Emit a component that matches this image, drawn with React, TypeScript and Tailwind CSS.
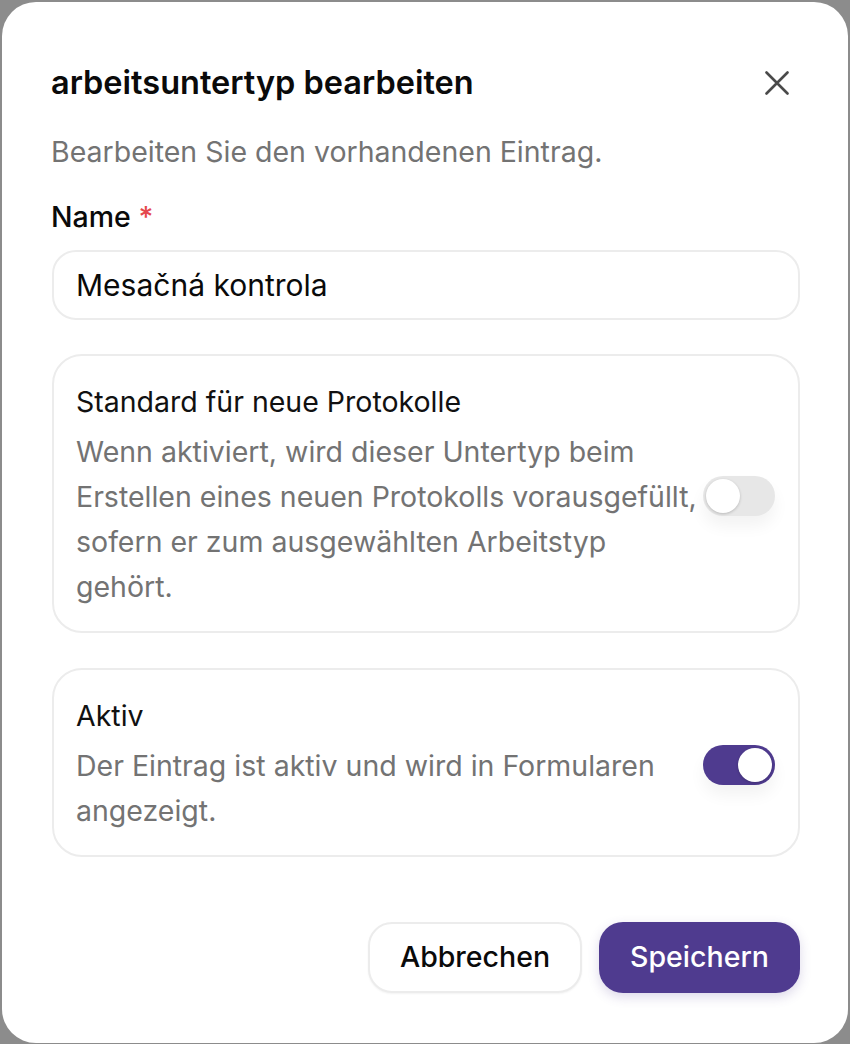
import { useState } from "react";

const font = { fontFamily: "Inter, 'Liberation Sans', sans-serif" };

type ToggleProps = { checked: boolean; onChange: (v: boolean) => void };

const Toggle = ({ checked, onChange }: ToggleProps) => (
  <button
    type="button"
    onClick={() => onChange(!checked)}
    className={
      checked
        ? "relative h-[40px] w-[72px] shrink-0 rounded-full bg-[#4f3b8f] shadow-[0_10px_16px_rgba(0,0,0,0.05)]"
        : "relative h-[40px] w-[72px] shrink-0 rounded-full bg-[#e7e7e7] shadow-[0_10px_16px_rgba(0,0,0,0.05)]"
    }
  >
    <span
      className={
        checked
          ? "absolute top-[3px] left-[35px] h-[34px] w-[34px] rounded-full bg-white shadow-[0_1px_3px_rgba(0,0,0,0.2)]"
          : "absolute top-[3px] left-[3px] h-[34px] w-[34px] rounded-full bg-white shadow-[0_1px_3px_rgba(0,0,0,0.2)]"
      }
    />
  </button>
);

type SettingCardProps = {
  title: string;
  description: string;
  checked: boolean;
  onChange: (v: boolean) => void;
};

const SettingCard = ({ title, description, checked, onChange }: SettingCardProps) => (
  <div className="flex items-center gap-[4px] rounded-[30px] border-2 border-[#ececec] pt-[27px] pb-[22px] pl-[22px] pr-[23px]">
    <div className="flex-1">
      <div className="text-[28.5px] leading-[38px] text-[#111]">{title}</div>
      <p className="mt-[8px] text-[28.5px] leading-[45px] text-[#737373]">{description}</p>
    </div>
    <Toggle checked={checked} onChange={onChange} />
  </div>
);

const App = () => {
  const [name, setName] = useState("Mesačná kontrola");
  const [isDefault, setIsDefault] = useState(false);
  const [isActive, setIsActive] = useState(true);

  return (
    <div className="min-h-[1044px] bg-[#8c8c8c] p-[2px]" style={font}>
      <div className="flex min-h-[1040px] flex-col rounded-[34px] bg-white pl-[50px] pr-[48px] pt-[59px] pb-[50px]">
        {/* Header */}
        <div className="flex items-center justify-between">
          <h2 className="-ml-[1px] text-[32.5px] font-semibold leading-[44px] text-[#0a0a0a]">
            arbeitsuntertyp bearbeiten
          </h2>
          <button type="button" className="mr-[11px] text-[#4a4a4a]">
            <svg width="24" height="24" viewBox="0 0 24 24" fill="none" stroke="currentColor" strokeWidth="2.6" strokeLinecap="round">
              <path d="M1.5 1.5 22.5 22.5M22.5 1.5 1.5 22.5" />
            </svg>
          </button>
        </div>
        <p className="-ml-[1px] mt-[27px] text-[28.5px] leading-[40px] text-[#737373]">
          Bearbeiten Sie den vorhandenen Eintrag.
        </p>

        {/* Name field */}
        <label className="-ml-[1px] mt-[25px] text-[28.5px] font-medium leading-[40px] text-[#0a0a0a]">
          Name <span className="text-[#e5484d]">*</span>
        </label>
        <input
          value={name}
          onChange={(e) => setName(e.target.value)}
          className="mt-[13px] h-[70px] rounded-[24px] border-2 border-[#ececec] px-[22px] text-[30px] text-[#0a0a0a] outline-none"
        />

        {/* Toggles */}
        <div className="mt-[34px] flex flex-col gap-[35px]">
          <SettingCard
            title="Standard für neue Protokolle"
            description="Wenn aktiviert, wird dieser Untertyp beim Erstellen eines neuen Protokolls vorausgefüllt, sofern er zum ausgewählten Arbeitstyp gehört."
            checked={isDefault}
            onChange={setIsDefault}
          />
          <SettingCard
            title="Aktiv"
            description="Der Eintrag ist aktiv und wird in Formularen angezeigt."
            checked={isActive}
            onChange={setIsActive}
          />
        </div>

        {/* Footer */}
        <div className="mt-[65px] flex justify-end gap-[17px]">
          <button
            type="button"
            className="h-[71px] w-[214px] rounded-[24px] border-2 border-[#ececec] bg-white text-[28.5px] font-medium text-[#0a0a0a] shadow-[0_1px_2px_rgba(0,0,0,0.05)]"
          >
            Abbrechen
          </button>
          <button
            type="button"
            className="h-[71px] w-[201px] rounded-[24px] bg-[#4f3b8f] text-[28.5px] font-medium text-white shadow-[0_4px_12px_rgba(79,59,143,0.2)]"
          >
            Speichern
          </button>
        </div>
      </div>
    </div>
  );
};

export default App;
